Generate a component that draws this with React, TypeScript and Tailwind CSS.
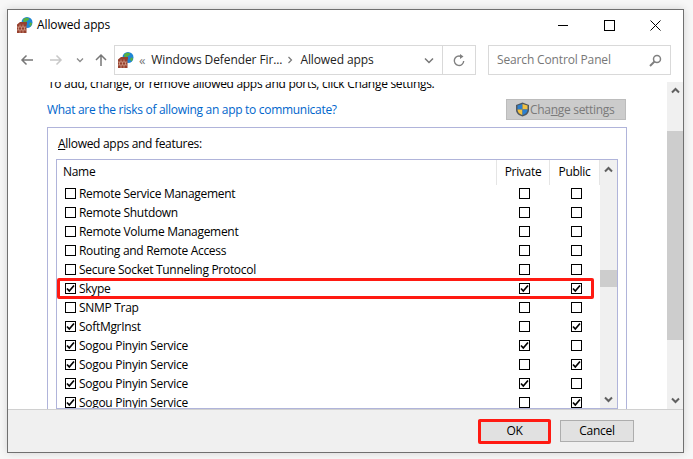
const font = { fontFamily: '"Open Sans", "Noto Sans", sans-serif' };

function FirewallIcon() {
  return (
    <svg width="16" height="16" viewBox="0 0 16 16" className="shrink-0">
      <circle cx="10" cy="5.500" r="5.500" fill="#1f86d6" />
      <path d="M6.500 2c2-1.800 4.500-1.500 5.500-.5.500 1-1 2-2 2.500s-1 2-2.500 1.500C6.500 5.500 5.500 3.500 6.500 2z" fill="#58b040" />
      <path d="M13 5.500c1 0 2 0 2 1.500L13.500 9.500 12 7.500z" fill="#58b040" />
      <path d="M0 7.500 3 5h7v2.500h-.5V16H0z" fill="#96402e" />
      <path d="M0 10h9.500M0 13h9.500M3 7.500V10M6 7.500V10M1.500 10v3M4.500 10v3M7.500 10v3M3 13v3M6 13v3" stroke="#d8a893" strokeWidth="0.7" fill="none" />
    </svg>
  );
}

function Check({ on }: { on: boolean }) {
  return (
    <span className="w-[11px] h-[11px] border border-black bg-white shrink-0 flex items-center justify-center">
      {on && (
        <svg width="9" height="9" viewBox="0 0 9 9">
          <path d="M1 4.500 3.300 7 8 1.500" fill="none" stroke="#000" strokeWidth="1.700" />
        </svg>
      )}
    </span>
  );
}

const rows: [string, boolean, boolean, boolean][] = [
  ["Remote Service Management", false, false, false],
  ["Remote Shutdown", false, false, false],
  ["Remote Volume Management", false, false, false],
  ["Routing and Remote Access", false, false, false],
  ["Secure Socket Tunneling Protocol", false, false, false],
  ["Skype", true, true, true],
  ["SNMP Trap", false, false, false],
  ["SoftMgrInst", true, false, true],
  ["Sogou Pinyin Service", true, true, false],
  ["Sogou Pinyin Service", true, false, true],
  ["Sogou Pinyin Service", true, true, false],
  ["Sogou Pinyin Service", true, false, true],
];

function ChevUp() {
  return (
    <svg width="9" height="7" viewBox="0 0 9 7">
      <path d="M1 5.500 4.500 2 8 5.500" fill="none" stroke="#606060" strokeWidth="2" />
    </svg>
  );
}
function ChevDown() {
  return (
    <svg width="9" height="7" viewBox="0 0 9 7">
      <path d="M1 1.500 4.500 5 8 1.500" fill="none" stroke="#606060" strokeWidth="2" />
    </svg>
  );
}

export default function App() {
  return (
    <div className="w-[693px] h-[459px] bg-[#f7f7f7] pt-[9px] pl-[7px] overflow-hidden text-[12px] tracking-[-0.3px] text-black" style={font}>
      <div className="w-[677px] h-[444px] border border-[#707070] bg-white flex flex-col relative shadow-[0_0_8px_rgba(0,0,0,0.15)]">
        {/* Title bar */}
        <div className="h-[30px] flex items-center shrink-0">
          <div className="ml-[9px] mr-[4px]"><FirewallIcon /></div>
          <span className="text-[12px] tracking-[-0.1px] leading-none">Allowed apps</span>
          <div className="ml-auto flex items-center">
            <div className="w-[46px] flex justify-center"><div className="w-[10px] h-[1px] bg-black" /></div>
            <div className="w-[46px] flex justify-center"><div className="w-[11px] h-[11px] border border-black" /></div>
            <div className="w-[46px] flex justify-center mr-[5px]">
              <svg width="11" height="11" viewBox="0 0 11 11"><path d="M.5.500l10 10M10.500.500l-10 10" stroke="#000" fill="none" /></svg>
            </div>
          </div>
        </div>
        {/* Toolbar */}
        <div className="h-[42px] flex items-start pt-[5px] shrink-0">
          <div className="w-[106px] h-[30px] flex items-center shrink-0 pl-[12px]">
            <svg width="14" height="12" viewBox="0 0 14 12"><path d="M13 6H2M6.500 1.500 2 6l4.500 4.500" fill="none" stroke="#777" strokeWidth="1.500" /></svg>
            <svg width="14" height="12" viewBox="0 0 14 12" className="ml-[15px]"><path d="M1 6h11M7.500 1.500 12 6l-4.500 4.500" fill="none" stroke="#c8c8c8" strokeWidth="1.500" /></svg>
            <svg width="8" height="6" viewBox="0 0 8 6" className="ml-[13px]"><path d="M1 1.500 4 4.500l3-3" fill="none" stroke="#8a8a8a" strokeWidth="1.300" /></svg>
            <svg width="14" height="14" viewBox="0 0 14 14" className="ml-[10px]"><path d="M7 13V2M2 7l5-5 5 5" fill="none" stroke="#777" strokeWidth="1.500" /></svg>
          </div>
          <div className="w-[329px] h-[30px] border border-[#d9d9d9] flex items-center shrink-0 tracking-[-0.2px]">
            <div className="ml-[3px]"><FirewallIcon /></div>
            <span className="ml-[5px] text-[#777] text-[13px] leading-none">«</span>
            <span className="ml-[6px] text-[#222] text-[12px] tracking-[-0.1px]">Windows Defender Fir...</span>
            <svg width="6" height="8" viewBox="0 0 6 8" className="ml-[5px]"><path d="M1.500 1 4.500 4l-3 3" fill="none" stroke="#777" strokeWidth="1.200" /></svg>
            <span className="ml-[7px] text-[#222] text-[12px] tracking-[-0.1px]">Allowed apps</span>
            <div className="ml-auto w-[19px] flex justify-center mr-[4px]">
              <svg width="10" height="7" viewBox="0 0 10 7"><path d="M1 1.500 5 5.500l4-4" fill="none" stroke="#777" strokeWidth="1.500" /></svg>
            </div>
          </div>
          <div className="w-[33px] h-[30px] border border-l-0 border-[#d9d9d9] flex items-center justify-center shrink-0">
            <svg width="12" height="13" viewBox="0 0 12 13"><path d="M8 2.500A4.700 4.700 0 1 0 10.700 7" fill="none" stroke="#808080" strokeWidth="1.400" /><path d="M7 0v5l3.500-2.500z" fill="#808080" /></svg>
          </div>
          <div className="w-[183px] h-[30px] ml-[12px] border border-[#d9d9d9] flex items-center shrink-0 pl-[8px] pr-[8px] text-[#777]">
            <span className="text-[12px] tracking-[-0.15px] whitespace-nowrap">Search Control Panel</span>
            <svg width="13" height="13" viewBox="0 0 13 13" className="ml-auto"><circle cx="8" cy="5" r="3.500" fill="none" stroke="#808080" strokeWidth="1.500" /><path d="M5.500 7.500 1 12" stroke="#808080" strokeWidth="2" /></svg>
          </div>
        </div>
        {/* Main */}
        <div className="flex-1 min-h-0 flex overflow-hidden">
          <div className="flex-1 min-w-0 flex flex-col overflow-hidden pl-[39px]">
            <div className="h-[11px] -mt-[1px] overflow-hidden shrink-0">
              <div className="-mt-[5px] ml-[1px] leading-[16px] whitespace-nowrap">To add, change, or remove allowed apps and ports, click Change settings.</div>
            </div>
            <div className="h-[35px] flex items-center justify-between shrink-0 w-[579px]">
              <a className="text-[#0066cc] whitespace-nowrap">What are the risks of allowing an app to communicate?</a>
              <div className="w-[120px] h-[21px] bg-[#cccccc] border border-[#bcbcbc] flex items-center pl-[8px] text-[#7a7a7a]">
                <svg width="15" height="15" viewBox="0 0 15 15" className="shrink-0">
                  <path d="M7.500.500 14 3v5c0 3.500-3 5.500-6.500 6.500C4 13.500 1 11.500 1 8V3z" fill="#50585f" />
                  <path d="M7.500 2 7.500 7.500H2.500V3.500z" fill="#2c7fcf" />
                  <path d="M7.500 2 12.500 3.500V7.500H7.500z" fill="#f1c143" />
                  <path d="M2.500 7.500H7.500V13C5 12.500 2.500 10.500 2.500 7.500z" fill="#f1c143" />
                  <path d="M7.500 7.500H12.500C12.500 10.500 10 12.500 7.500 13z" fill="#2c7fcf" />
                </svg>
                <span className="whitespace-nowrap">Cha<u>n</u>ge settings</span>
              </div>
            </div>
            <div className="w-[580px] flex-1 min-h-0 border border-b-0 border-[#b0b4da] flex flex-col pl-[8px] pr-[8px]">
              <div className="h-[31px] flex items-center shrink-0 pl-[2px] pt-[1px]"><span><u>A</u>llowed apps and features:</span></div>
              <div className="flex-1 min-h-0 border border-[#b0b4da] flex overflow-hidden">
                <div className="flex-1 min-w-0 flex flex-col">
                  <div className="h-[25px] flex shrink-0">
                    <div className="flex-1 pl-[6px] pt-[3px] border-r border-[#e5e5e5]">Name</div>
                    <div className="w-[53px] text-center pt-[3px] border-r border-[#e5e5e5]">Private</div>
                    <div className="w-[50px] text-center pt-[3px] border-r border-[#e5e5e5]">Public</div>
                  </div>
                  <div className="flex-1 min-h-0 overflow-hidden -mt-[1px]">
                    {rows.map(([name, a, b, c], i) => (
                      <div key={i} className="h-[19px] flex items-center">
                        <div className="w-[8px] shrink-0" />
                        <Check on={a} />
                        <span className="ml-[3px] flex-1 whitespace-nowrap">{name}</span>
                        <div className="w-[53px] flex justify-center shrink-0 pl-[1px]"><Check on={b} /></div>
                        <div className="w-[50px] flex justify-center shrink-0 pl-[2px]"><Check on={c} /></div>
                      </div>
                    ))}
                  </div>
                </div>
                <div className="w-[17px] bg-[#f0f0f0] flex flex-col items-center shrink-0">
                  <div className="h-[19px] flex items-center justify-center"><ChevUp /></div>
                  <div className="mt-[91px] w-full h-[17px] bg-[#cdcdcd]" />
                  <div className="mt-auto h-[17px] flex items-center justify-center"><ChevDown /></div>
                </div>
              </div>
            </div>
          </div>
          <div className="w-[16px] bg-[#f0f0f0] flex flex-col items-center shrink-0">
            <div className="h-[16px] flex items-center justify-center shrink-0"><ChevUp /></div>
            <div className="mt-[33px] w-full h-[209px] bg-[#cdcdcd]" />
            <div className="mt-auto h-[17px] flex items-center justify-center shrink-0"><ChevDown /></div>
          </div>
        </div>
        {/* Footer */}
        <div className="h-[43px] bg-[#f0f0f0] border-t border-[#d0d0d0] shrink-0 flex items-center justify-end pr-[49px] gap-[9px]">
          <button className="w-[73px] h-[22px] bg-[#e1e1e1] border border-[#adadad]">OK</button>
          <button className="w-[74px] h-[22px] bg-[#e1e1e1] border border-[#adadad]">Cancel</button>
        </div>
        {/* Red annotations */}
        <div className="absolute left-[49px] top-[268px] w-[537px] h-[21px] border-[3px] border-[#ff1a12] rounded-[2px]" />
        <div className="absolute left-[470px] top-[409px] w-[73px] h-[25px] border-[3px] border-[#ff1a12] rounded-[2px]" />
      </div>
    </div>
  );
}
